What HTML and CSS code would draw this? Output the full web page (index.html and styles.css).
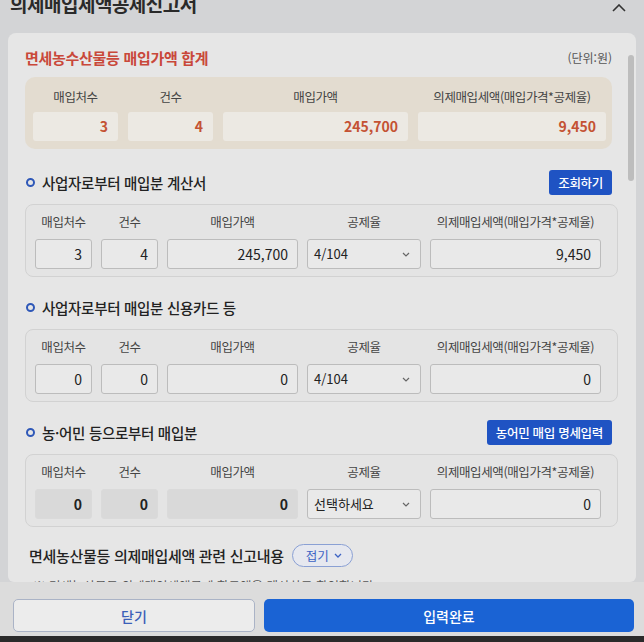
FILE: index.html
```html
<!DOCTYPE html>
<html lang="ko">
<head>
    <meta charset="UTF-8">
    <title>의제매입세액공제신고서</title>
    <link rel="stylesheet" href="styles.css">
</head>
<body>
    <div class="sheet">
        <div class="top">
            <h1>의제매입세액공제신고서</h1>
            <svg class="fold-up" width="14" height="8" viewBox="0 0 14 8"><path d="M1 7 L7 1 L13 7" fill="none" stroke="#333" stroke-width="1.6"/></svg>
        </div>

        <div class="card">
            <div class="scroll-thumb"></div>

            <div class="sum-head">
                <h2>면세농수산물등 매입가액 합계</h2>
                <span class="unit">(단위:원)</span>
            </div>
            <div class="sum-box">
                <div class="lbl">매입처수</div>
                <div class="lbl">건수</div>
                <div class="lbl">매입가액</div>
                <div class="lbl">의제매입세액(매입가격*공제율)</div>
                <div class="val">3</div>
                <div class="val">4</div>
                <div class="val">245,700</div>
                <div class="val">9,450</div>
            </div>

            <div class="sec-head first">
                <h3><span class="dot"></span>사업자로부터 매입분 계산서</h3>
                <button class="btn-blue">조회하기</button>
            </div>
            <div class="grid-box">
                <div class="lbl">매입처수</div>
                <div class="lbl">건수</div>
                <div class="lbl">매입가액</div>
                <div class="lbl">공제율</div>
                <div class="lbl">의제매입세액(매입가격*공제율)</div>
                <div class="inp">3</div>
                <div class="inp">4</div>
                <div class="inp">245,700</div>
                <div class="sel">4/104 <svg width="8" height="5" viewBox="0 0 8 5"><path d="M1 1 L4 4 L7 1" fill="none" stroke="#666" stroke-width="1.2"/></svg></div>
                <div class="inp">9,450</div>
            </div>

            <div class="sec-head">
                <h3><span class="dot"></span>사업자로부터 매입분 신용카드 등</h3>
            </div>
            <div class="grid-box">
                <div class="lbl">매입처수</div>
                <div class="lbl">건수</div>
                <div class="lbl">매입가액</div>
                <div class="lbl">공제율</div>
                <div class="lbl">의제매입세액(매입가격*공제율)</div>
                <div class="inp">0</div>
                <div class="inp">0</div>
                <div class="inp">0</div>
                <div class="sel">4/104 <svg width="8" height="5" viewBox="0 0 8 5"><path d="M1 1 L4 4 L7 1" fill="none" stroke="#666" stroke-width="1.2"/></svg></div>
                <div class="inp">0</div>
            </div>

            <div class="sec-head">
                <h3><span class="dot"></span>농·어민 등으로부터 매입분</h3>
                <button class="btn-blue">농어민 매입 명세입력</button>
            </div>
            <div class="grid-box">
                <div class="lbl">매입처수</div>
                <div class="lbl">건수</div>
                <div class="lbl">매입가액</div>
                <div class="lbl">공제율</div>
                <div class="lbl">의제매입세액(매입가격*공제율)</div>
                <div class="inp off">0</div>
                <div class="inp off">0</div>
                <div class="inp off">0</div>
                <div class="sel">선택하세요 <svg width="8" height="5" viewBox="0 0 8 5"><path d="M1 1 L4 4 L7 1" fill="none" stroke="#666" stroke-width="1.2"/></svg></div>
                <div class="inp">0</div>
            </div>

            <div class="report-head">
                <h3>면세농산물등 의제매입세액 관련 신고내용</h3>
                <button class="pill">접기 <svg width="8" height="5" viewBox="0 0 8 5"><path d="M1 1 L4 4 L7 1" fill="none" stroke="#3d63c4" stroke-width="1.3"/></svg></button>
            </div>
            <p class="note">※ 면세농산물등 의제매입세액공제 한도액을 계산하고 확인합니다</p>
        </div>

        <div class="footer">
            <button class="btn-close">닫기</button>
            <button class="btn-done">입력완료</button>
        </div>
        <div class="edge"></div>
    </div>
</body>
</html>
```

FILE: styles.css
```css
body {
    margin: 0;
    background: #d3d4d6;
    font-family: "Noto Sans CJK KR", "Noto Sans", sans-serif;
    color: #222;
}

.sheet {
    width: 644px;
    height: 642px;
    overflow: hidden;
    display: flex;
    flex-direction: column;
}

.top {
    height: 33px;
    flex: none;
    display: flex;
    justify-content: space-between;
    padding: 0 18px 0 10px;
    overflow: hidden;
}

.top h1 {
    margin: -11px 0 0;
    font-size: 19px;
    font-weight: 700;
    color: #2a2a2a;
    letter-spacing: -0.5px;
    line-height: 30px;
}

.fold-up {
    margin-top: 4px;
}

.card {
    position: relative;
    flex: none;
    height: 549px;
    margin: 0 8px;
    padding: 14px 18px 0 17px;
    background: #e6e6e6;
    border-radius: 8px 8px 6px 6px;
    overflow: hidden;
    box-sizing: border-box;
}

.scroll-thumb {
    position: absolute;
    right: 2px;
    top: 22px;
    width: 6px;
    height: 126px;
    border-radius: 3px;
    background: #bdbdbd;
}

.sum-head {
    display: flex;
    justify-content: space-between;
    align-items: center;
    height: 20px;
    padding-right: 6px;
}

.sum-head h2 {
    margin: 0;
    font-size: 15px;
    font-weight: 700;
    color: #c9483a;
    letter-spacing: -0.3px;
}

.unit {
    font-size: 12px;
    color: #555;
}

.sum-box {
    display: grid;
    grid-template-columns: 85px 85px 185px 1fr;
    column-gap: 10px;
    row-gap: 6px;
    margin: 10px 6px 0 0;
    padding: 11px 6px 8px 8px;
    background: #e3dcd0;
    border-radius: 10px;
}

.lbl {
    text-align: center;
    font-size: 12.5px;
    line-height: 18px;
    color: #444;
    white-space: nowrap;
    letter-spacing: -0.4px;
}

.val {
    height: 29px;
    line-height: 29px;
    padding-right: 10px;
    text-align: right;
    background: #ece9e3;
    border-radius: 3px;
    font-size: 14px;
    font-weight: 700;
    color: #c45233;
}

.sec-head {
    display: flex;
    justify-content: space-between;
    align-items: center;
    height: 25px;
    margin: 18px 6px 9px 0;
}

.sec-head.first {
    margin-top: 21px;
}

.sec-head h3,
.report-head h3 {
    margin: 0;
    display: flex;
    align-items: center;
    font-size: 14.5px;
    font-weight: 500;
    color: #222;
    letter-spacing: -0.3px;
}

.dot {
    width: 5px;
    height: 5px;
    border: 2px solid #2f58b8;
    border-radius: 50%;
    margin: 0 7px 0 1px;
}

.btn-blue {
    height: 25px;
    padding: 0 9px;
    border: none;
    border-radius: 3px;
    background: #1f53c3;
    color: #fff;
    font-family: inherit;
    font-size: 12.5px;
    font-weight: 500;
    letter-spacing: -0.3px;
}

.grid-box {
    display: grid;
    grid-template-columns: 57px 57px 131px 114px 1fr;
    column-gap: 9px;
    row-gap: 8px;
    padding: 8px 16px 7px 9px;
    border: 1px solid #d2d2d2;
    border-radius: 8px;
    background: #e4e4e4;
}

.inp,
.sel {
    height: 30px;
    box-sizing: border-box;
    border: 1px solid #bcbcbc;
    border-radius: 3px;
    background: #e9e9e9;
    font-size: 14px;
    line-height: 28px;
}

.inp {
    text-align: right;
    padding-right: 9px;
}

.inp.off {
    border-color: #dadada;
    background: #d9d9d9;
    font-weight: 700;
}

.sel {
    display: flex;
    justify-content: space-between;
    align-items: center;
    padding: 0 10px 0 6px;
    font-size: 13px;
}

.report-head {
    display: flex;
    align-items: center;
    gap: 8px;
    margin: 17px 0 0 4px;
    height: 23px;
}

.report-head h3 {
    font-size: 15px;
}

.pill {
    display: flex;
    align-items: center;
    gap: 5px;
    height: 23px;
    padding: 0 10px 0 13px;
    border: 1px solid #8aa0d4;
    border-radius: 12px;
    background: #e6e8ef;
    color: #3d63c4;
    font-family: inherit;
    font-size: 12.5px;
}

.note {
    margin: 9px 0 0 8px;
    font-size: 12.5px;
    color: #555;
}

.footer {
    flex: 1;
    display: flex;
    gap: 9px;
    padding: 17px 10px 0 13px;
    background: #dcdcdc;
}

.footer button {
    height: 33px;
    border-radius: 5px;
    font-family: inherit;
    font-size: 14px;
    font-weight: 500;
}

.btn-close {
    width: 242px;
    border: 1px solid #aab3c6;
    background: #ececec;
    color: #3b5fb8;
}

.btn-done {
    flex: 1;
    border: none;
    background: #1a63d4;
    color: #fff;
}

.edge {
    height: 6px;
    flex: none;
    background: #2a2a2a;
}
```
